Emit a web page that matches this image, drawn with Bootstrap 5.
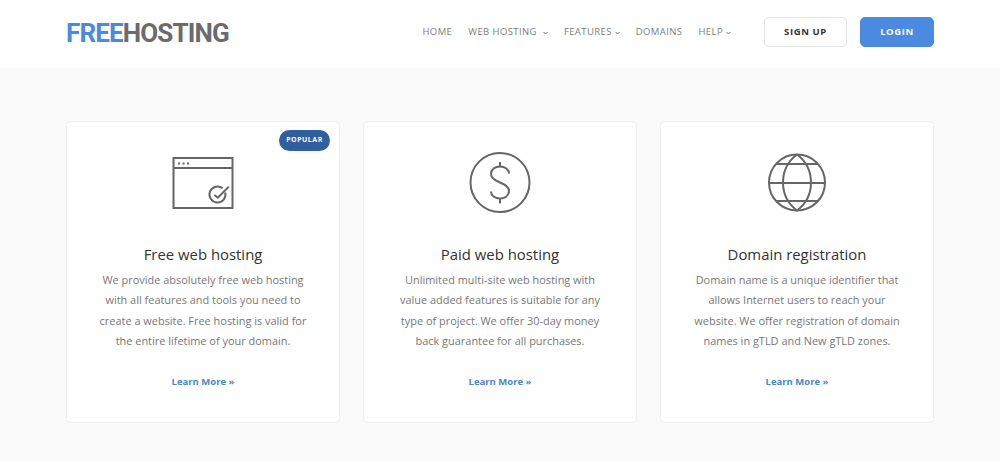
<!DOCTYPE html>
<html>
<head>
    <title>Free Hosting</title>
    <link href="https://cdn.jsdelivr.net/npm/bootstrap@5.3.2/dist/css/bootstrap.min.css" rel="stylesheet">
    <script src="https://cdn.jsdelivr.net/npm/bootstrap@5.3.2/dist/js/bootstrap.bundle.min.js"></script>
    <style>
        body {
            background-color: #fafafa;
            font-family: "Open Sans", sans-serif;
            color: #666;
        }
        .top-bar {
            height: 68px;
            background: #fff;
            padding: 0 66px 5px;
        }
        .brand-logo {
            font-family: Roboto, sans-serif;
            font-size: 26px;
            font-weight: 700;
            letter-spacing: -0.85px;
            color: #6b6b6b;
            text-decoration: none;
            line-height: 1;
            margin-top: 2px;
        }
        .brand-logo span {
            color: #4a8ae0;
        }
        .menu-links {
            gap: 16px;
            margin-right: 33px;
            margin-top: 2px;
        }
        .menu-links a {
            font-size: 9.500px;
            letter-spacing: 0.4px;
            color: #7d7d7d;
            text-decoration: none;
            display: flex;
            align-items: center;
        }
        .menu-caret {
            width: 5px;
            height: 4px;
            margin-left: 3px;
        }
        .caret-wide {
            margin-left: 6px;
        }
        .btn-signup, .btn-login {
            width: 83px;
            height: 30px;
            padding: 1px 0 0;
            font-size: 9.500px;
            font-weight: 700;
            letter-spacing: 0.6px;
            border-radius: 5px;
            display: flex;
            align-items: center;
            justify-content: center;
        }
        .btn-signup {
            background: #fff;
            border: 1px solid #e3e3e3;
            color: #333;
        }
        .btn-login {
            width: 74px;
            margin-left: 13px;
            background: #4a8ae0;
            border: 1px solid #4a8ae0;
            color: #fff;
        }
        .plans-wrap {
            padding: 53px 66px 0;
            gap: 23px;
        }
        .plan-box {
            position: relative;
            flex: 1 1 0;
            height: 302px;
            background: #fff;
            border: 1px solid #eee;
            border-radius: 5px;
            padding-top: 30px;
            text-align: center;
        }
        .plan-icon {
            display: block;
            margin: 0 auto;
            width: 64px;
            height: 64px;
            fill: none;
            stroke: #666;
            stroke-width: 2;
        }
        .plan-title {
            font-size: 14.900px;
            font-weight: 400;
            color: #333;
            margin: 27px 0 0;
            line-height: 22px;
        }
        .plan-text {
            font-size: 10.950px;
            line-height: 20.400px;
            color: #777;
            margin: 5px 0 0;
        }
        .plan-link {
            display: block;
            margin-top: 23px;
            font-size: 9.500px;
            font-weight: 700;
            color: #4a86c5;
            text-decoration: none;
        }
        .popular-tag {
            position: absolute;
            top: 8px;
            right: 9px;
            width: 51px;
            height: 21px;
            border-radius: 11px;
            background: #2f5f9f;
            color: #fff;
            font-size: 7px;
            font-weight: 700;
            letter-spacing: 0.5px;
            display: flex;
            align-items: center;
            justify-content: center;
        }
    </style>
</head>
<body>
    <nav class="top-bar d-flex align-items-center justify-content-between">
        <a class="brand-logo" href="#"><span>FREE</span>HOSTING</a>
        <div class="d-flex align-items-center">
            <div class="menu-links d-flex align-items-center">
                <a href="#">HOME</a>
                <a href="#">WEB HOSTING
                    <svg class="menu-caret caret-wide" viewBox="0 0 5 4"><path d="M0.5 1l2 2 2-2" fill="none" stroke="#7d7d7d"/></svg>
                </a>
                <a href="#">FEATURES
                    <svg class="menu-caret" viewBox="0 0 5 4"><path d="M0.5 1l2 2 2-2" fill="none" stroke="#7d7d7d"/></svg>
                </a>
                <a href="#">DOMAINS</a>
                <a href="#">HELP
                    <svg class="menu-caret" viewBox="0 0 5 4"><path d="M0.5 1l2 2 2-2" fill="none" stroke="#7d7d7d"/></svg>
                </a>
            </div>
            <button class="btn btn-signup" type="button">SIGN UP</button>
            <button class="btn btn-login" type="button">LOGIN</button>
        </div>
    </nav>

    <div class="plans-wrap d-flex">
        <div class="plan-box">
            <span class="popular-tag">POPULAR</span>
            <svg class="plan-icon" viewBox="0 1 64 64">
                <rect x="2.500" y="7" width="59" height="50"/>
                <path d="M2.500 17h59"/>
                <path d="M7 12.500h2M11.500 12.500h2M16 12.500h2"/>
                <path d="M54.200 41.400A8 8 0 1 1 51.600 37.300"/>
                <path d="M43.500 44l3.300 2.700 11-11"/>
            </svg>
            <h5 class="plan-title">Free web hosting</h5>
            <p class="plan-text">We provide absolutely free web hosting<br>with all features and tools you need to<br>create a website. Free hosting is valid for<br>the entire lifetime of your domain.</p>
            <a class="plan-link" href="#">Learn More »</a>
        </div>
        <div class="plan-box">
            <svg class="plan-icon" viewBox="0 0 64 64">
                <circle cx="32" cy="30.500" r="29.500"/>
                <path d="M41 21.500c0-4-4-7-9-7s-9 3-9 7.500 4 6.500 9 8.500 9 4 9 8.500-4 7.500-9 7.500-9-3-9-7"/>
                <path d="M32 10v4.500M32 46.500v5"/>
            </svg>
            <h5 class="plan-title">Paid web hosting</h5>
            <p class="plan-text">Unlimited multi-site web hosting with<br>value added features is suitable for any<br>type of project. We offer 30-day money<br>back guarantee for all purchases.</p>
            <a class="plan-link" href="#">Learn More »</a>
        </div>
        <div class="plan-box">
            <svg class="plan-icon" viewBox="0 0 64 64">
                <circle cx="32" cy="30.500" r="28"/>
                <path d="M32 2.500A35 35 0 0 0 32 58.500A35 35 0 0 0 32 2.500"/>
                <path d="M11 12h42M4 31h56M11 49h42"/>
            </svg>
            <h5 class="plan-title">Domain registration</h5>
            <p class="plan-text">Domain name is a unique identifier that<br>allows Internet users to reach your<br>website. We offer registration of domain<br>names in gTLD and New gTLD zones.</p>
            <a class="plan-link" href="#">Learn More »</a>
        </div>
    </div>
</body>
</html>
